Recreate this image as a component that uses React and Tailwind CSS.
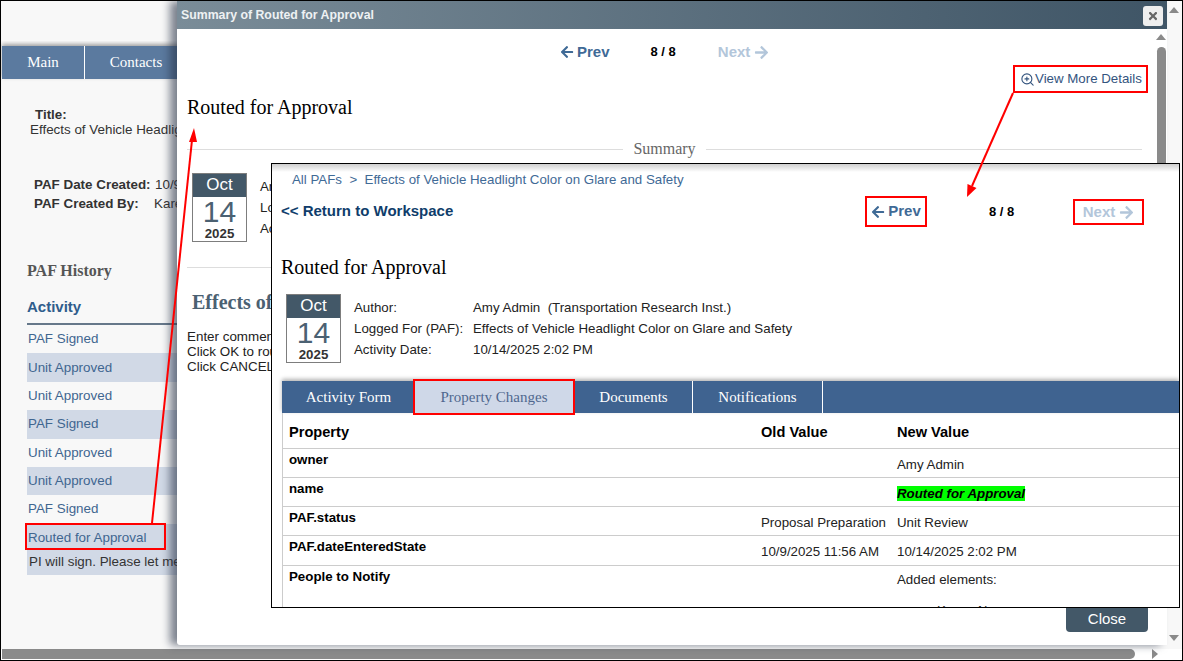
import { FaArrowLeft, FaArrowRight, FaTimes } from "react-icons/fa"
import { ZoomIn } from "lucide-react"

const historyRows = [
  { label: "PAF Signed", on: false },
  { label: "Unit Approved", on: true },
  { label: "Unit Approved", on: false },
  { label: "PAF Signed", on: true },
  { label: "Unit Approved", on: false },
  { label: "Unit Approved", on: true },
  { label: "PAF Signed", on: false },
]

const tableRows = [
  { h: "h-[29px]", name: "owner", oldVal: "", newVal: "Amy Admin" },
  { h: "h-[29px]", name: "name", oldVal: "", newVal: "Routed for Approval", mark: true },
  { h: "h-[29px]", name: "PAF.status", oldVal: "Proposal Preparation", newVal: "Unit Review" },
  { h: "h-[30px]", name: "PAF.dateEnteredState", oldVal: "10/9/2025 11:56 AM", newVal: "10/14/2025 2:02 PM" },
]

function DateBox() {
  return (
    <div className="w-[55px] h-[69px] border border-[#7d7d7d] bg-white flex flex-col items-center shrink-0">
      <div className="w-full h-[23px] bg-[#435868] text-white text-[17px] leading-[22px] text-center">Oct</div>
      <div className="text-[30px] leading-[29px] h-[29px] text-[#4b6172]">14</div>
      <div className="text-[13.3px] leading-[15px] font-bold text-[#333]">2025</div>
    </div>
  )
}

function Background() {
  return (
    <div className="h-[648px] bg-[#f8f8f8] pt-[40px]">
      <div className="w-[176px] overflow-hidden h-[535px] pt-[5px]">
        {/* Tabs */}
        <div className="flex ml-px h-[33px] w-[200px] bg-[#5b7a9f] shadow-[0_-2px_4px_rgba(0,0,0,0.35)] font-['Liberation_Serif',serif] text-[15px] text-white">
          <div className="w-[83px] flex items-center justify-center border-r border-white">Main</div>
          <div className="w-[102px] flex items-center justify-center">Contacts</div>
        </div>

        <div className="pl-[34px] mt-[28px] text-[13.4px] leading-[15px] font-semibold text-[#333]">Title:</div>
        <div className="pl-[29px] text-[13.4px] leading-[15px] text-[#333] whitespace-nowrap">Effects of Vehicle Headlight Color</div>

        <div className="flex pl-[33px] mt-[38px] text-[13.4px] leading-[19px] font-bold text-[#333] whitespace-nowrap">
          <span className="w-[121px] shrink-0">PAF Date Created:</span>
          <span className="font-normal">10/9/2025</span>
        </div>
        <div className="flex pl-[33px] text-[13.4px] leading-[19px] font-bold text-[#333] whitespace-nowrap">
          <span className="w-[120px] shrink-0">PAF Created By:</span>
          <span className="font-normal">Karen Alaya</span>
        </div>

        <div className="pl-[26px] mt-[49px] font-['Liberation_Serif',serif] font-bold text-[16px] leading-[18px] text-[#555]">PAF History</div>
        <div className="ml-[26px] mt-[14px] h-[31px] border-b-2 border-[#66788a] text-[15px] leading-[26px] font-bold text-[#2f5d8c]">Activity</div>

        <div className="ml-[26px]">
          {historyRows.map((row, i) => (
            <div
              key={i}
              className={`h-[28.4px] pl-px flex items-center text-[13.4px] text-[#3f6690] ${row.on ? "bg-[#d1d9e6]" : ""}`}
            >
              {row.label}
            </div>
          ))}
          <div className="bg-[#d1d9e6] h-[51px]">
            <div className="h-[28px] pl-px flex items-center text-[13.4px] text-[#3f6690]">Routed for Approval</div>
            <div className="pl-[2px] text-[13.4px] leading-[19px] text-[#333] whitespace-nowrap">PI will sign. Please let me know</div>
          </div>
        </div>
      </div>
    </div>
  )
}

function Dialog() {
  return (
    <div className="absolute left-[176px] top-0 w-[990px] h-[644px] bg-white rounded-bl-[3px] shadow-[-7px_0_9px_rgba(40,50,70,0.6)] overflow-hidden">
      {/* Title bar */}
      <div className="h-[28px] bg-gradient-to-r from-[#7a8c98] to-[#3f5566] pl-[4px] pr-[4px] flex items-center justify-between">
        <span className="text-[12.3px] font-bold text-[#eef1f3]">Summary of Routed for Approval</span>
        <span className="w-[20px] h-[20px] mt-[2px] rounded-[3px] bg-[#eeeeee] flex items-center justify-center text-[#666]">
          <FaTimes className="w-[12px] h-[12px]" />
        </span>
      </div>

      <div className="flex">
        <div className="w-[978px] pl-[10px] pr-[13px]">
          {/* Prev / Next */}
          <div className="flex items-center h-[20px] mt-[13px] text-[15px] font-bold">
            <span className="ml-[373px] flex items-center gap-[3px] text-[#3f6a96]">
              <FaArrowLeft className="w-[14px] h-[14px]" /> Prev
            </span>
            <span className="ml-[41px] text-[13px] text-black">8 / 8</span>
            <span className="ml-[42px] flex items-center gap-[4px] text-[#b3c6da]">
              Next <FaArrowRight className="w-[15px] h-[15px]" />
            </span>
          </div>

          {/* View more */}
          <div className="flex justify-end mt-[3px]">
            <span className="h-[28px] w-[135px] -mr-[6px] border-2 border-[#f00] flex items-center pl-[5px] text-[13.3px] text-[#33547e] whitespace-nowrap">
              <ZoomIn className="w-[15px] h-[15px] shrink-0" strokeWidth={1.8} />
              View More Details
            </span>
          </div>

          <h2 className="font-['Liberation_Serif',serif] text-[20px] leading-[24px] text-black mt-[2px]">Routed for Approval</h2>

          {/* Summary divider */}
          <div className="flex items-center mt-[20px] h-[20px] font-['Liberation_Serif',serif] text-[16px] text-[#666]">
            <div className="flex-1 h-px bg-[#dddddd]" />
            <span className="px-[10px]">Summary</span>
            <div className="flex-1 h-px bg-[#dddddd]" />
          </div>

          {/* This part sits behind the detail window, only its left edge shows */}
          <div className="w-[84px] overflow-hidden">
            <div className="flex mt-[14px] pl-[5px]">
              <DateBox />
              <div className="ml-[13px] pt-[3px] text-[13.3px] leading-[21px] text-[#222] whitespace-nowrap">
                <div>Amy Admin</div>
                <div>Logged For (PAF):</div>
                <div>Activity Date:</div>
              </div>
            </div>

            <div className="h-px bg-[#dddddd] mt-[25px]" />
            <div className="pl-[5px] mt-[22px] font-['Liberation_Serif',serif] font-bold text-[20px] leading-[24px] text-[#4b6172] whitespace-nowrap">
              Effects of Vehicle
            </div>
            <div className="mt-[15px] text-[13.4px] leading-[15px] text-[#222] whitespace-nowrap">
              <div>Enter comments here</div>
              <div>Click OK to route</div>
              <div>Click CANCEL to return</div>
            </div>
          </div>
        </div>

        {/* Inner scrollbar */}
        <div className="w-[12px] flex flex-col items-center pt-[5px]">
          <div className="w-0 h-0 border-x-[5px] border-x-transparent border-b-[6px] border-b-[#8a8a8a]" />
          <div className="w-[9px] h-[560px] mt-[7px] rounded-[5px] bg-[#8a8a8a]" />
        </div>
      </div>
    </div>
  )
}

function CloseButton() {
  return (
    <div className="absolute left-[1065px] top-[606px] w-[82px] h-[25px] bg-[#435868] rounded-b-[4px] flex items-center justify-center text-[15px] text-white">
      Close
    </div>
  )
}

function DetailWindow() {
  return (
    <div className="absolute left-[270px] top-[162px] w-[909px] h-[445px] border border-black bg-white overflow-hidden">
      <div className="h-[8px] -mb-[8px] bg-gradient-to-b from-[#cfcfcf] to-white" />

      <div className="pl-[20px] pt-[8px] h-[25px] text-[13.3px] leading-[16px] text-[#3f6a96] whitespace-nowrap">
        All PAFs &nbsp;&gt;&nbsp; Effects of Vehicle Headlight Color on Glare and Safety
      </div>

      {/* Return row */}
      <div className="flex items-center h-[45px] pl-[9px]">
        <span className="w-[584px] text-[15px] font-bold text-[#0f3d6b]">&lt;&lt; Return to Workspace</span>
        <span className="w-[62px] h-[31px] border-2 border-[#f00] flex items-center justify-center gap-[3px] text-[15px] font-bold text-[#3f6a96]">
          <FaArrowLeft className="w-[14px] h-[14px]" /> Prev
        </span>
        <span className="ml-[62px] w-[84px] text-[13px] font-bold text-black">8 / 8</span>
        <span className="w-[71px] h-[26px] mt-[1px] border-2 border-[#f00] flex items-center justify-center gap-[4px] text-[15px] font-bold text-[#b3c6da]">
          Next <FaArrowRight className="w-[15px] h-[15px]" />
        </span>
      </div>

      <h2 className="pl-[9px] mt-[21px] font-['Liberation_Serif',serif] text-[20px] leading-[24px] text-black">Routed for Approval</h2>

      <div className="flex pl-[14px] mt-[15px]">
        <DateBox />
        <div className="ml-[13px] pt-[3px] grid content-start grid-cols-[119px_1fr] text-[13.3px] leading-[21px] text-[#222] whitespace-nowrap">
          <span>Author:</span>
          <span>Amy Admin&nbsp; (Transportation Research Inst.)</span>
          <span>Logged For (PAF):</span>
          <span>Effects of Vehicle Headlight Color on Glare and Safety</span>
          <span>Activity Date:</span>
          <span>10/14/2025 2:02 PM</span>
        </div>
      </div>

      {/* Tabs */}
      <div className="ml-[10px] mt-[18px] h-[32px] flex bg-[#3f6390] shadow-[0_-2px_4px_rgba(0,0,0,0.3)] font-['Liberation_Serif',serif] text-[15px] text-white">
        <div className="w-[131px] pl-[2px] flex items-center justify-center">Activity Form</div>
        <div className="relative w-[162px] flex items-center justify-center bg-[#cfd8e8] text-[#50688f]">
          Property Changes
          <div className="absolute -top-[2px] -bottom-[2px] left-0 right-0 border-2 border-[#f00]" />
        </div>
        <div className="w-[118px] flex items-center justify-center border-r border-white">Documents</div>
        <div className="w-[130px] flex items-center justify-center border-r border-white">Notifications</div>
      </div>

      {/* Property table */}
      <div className="ml-[10px] border-l border-[#cccccc] text-[13.3px] leading-[20px] text-[#222]">
        <div className="grid grid-cols-[472px_136px_1fr] h-[36px] border-b border-[#cccccc] pl-[6px] pt-[2px] items-center text-[14.6px] font-bold text-black">
          <span>Property</span>
          <span>Old Value</span>
          <span>New Value</span>
        </div>
        {tableRows.map((row) => (
          <div key={row.name} className={`grid grid-cols-[472px_136px_1fr] ${row.h} border-b border-[#cccccc] pl-[6px] pt-px`}>
            <span className="font-bold text-black">{row.name}</span>
            <span className="pt-[5px] whitespace-nowrap">{row.oldVal}</span>
            <span className="pt-[5px]">
              {row.mark ? <span className="bg-[#00ff00] italic font-bold text-black">{row.newVal}</span> : row.newVal}
            </span>
          </div>
        ))}
        <div className="grid grid-cols-[472px_136px_1fr] pl-[6px] pt-px">
          <span className="font-bold text-black">People to Notify</span>
          <span />
          <div className="pt-[3px]">
            <div>Added elements:</div>
            <div className="pl-[40px] mt-[11px]">Karen Alaya</div>
          </div>
        </div>
      </div>
    </div>
  )
}

function Annotations() {
  return (
    <svg className="absolute -left-px -top-px pointer-events-none" width="1183" height="661" viewBox="0 0 1183 661" fill="none">
      <path d="M152 523 L192 140" stroke="#f00" strokeWidth="2" />
      <path d="M194 128 L189 142 L197 142 Z" fill="#f00" />
      <rect x="26" y="524" width="139" height="25" stroke="#f00" strokeWidth="2" />
      <path d="M1013 93 L972 186" stroke="#f00" strokeWidth="2" />
      <path d="M967 197 L967.5 184 L976.5 188 Z" fill="#f00" />
    </svg>
  )
}

function OuterScrollbars() {
  return (
    <>
      <div className="absolute left-[1168px] top-[6px] w-0 h-0 border-x-[5px] border-x-transparent border-b-[6px] border-b-[#8a8a8a]" />
      <div className="absolute left-[1168px] top-[634px] w-0 h-0 border-x-[5px] border-x-transparent border-t-[6px] border-t-[#8a8a8a]" />
    </>
  )
}

export default function App() {
  return (
    <div className="relative w-[1183px] h-[661px] bg-white border border-black overflow-hidden font-['Liberation_Sans',Arial,sans-serif]">
      <Background />
      <div className="flex items-center h-[10px] pl-px">
        <div className="w-[1133px] h-[10px] bg-[#8a8a8a] rounded-r-[5px]" />
        <div className="ml-[17px] w-0 h-0 border-y-[5px] border-y-transparent border-l-[6px] border-l-[#8a8a8a]" />
      </div>
      <Dialog />
      <CloseButton />
      <DetailWindow />
      <OuterScrollbars />
      <Annotations />
    </div>
  )
}
